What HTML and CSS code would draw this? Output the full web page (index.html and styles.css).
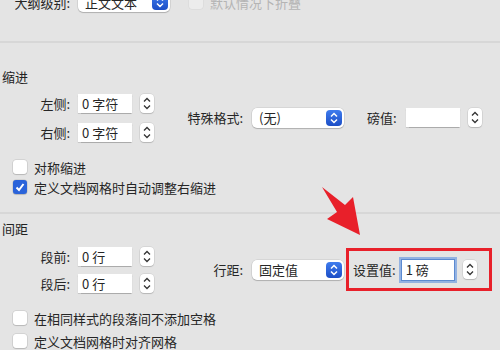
FILE: index.html
```html
<!DOCTYPE html>
<html lang="zh">
<head>
  <meta charset="UTF-8">
  <title>段落</title>
  <link rel="stylesheet" href="styles.css">
</head>
<body>

<div class="panel">
  <div class="row toprow">
    <span class="lbl">大纲级别:</span>
    <div class="popup"><span>正文文本</span><span class="popup-btn"><svg width="16" height="16"><path d="M5 6.5 L8 3.5 L11 6.5 M5 9.5 L8 12.5 L11 9.5" fill="none" stroke="#fff" stroke-width="1.5"/></svg></span></div>
    <span class="check disabled"></span>
    <span class="dim">默认情况下折叠</span>
  </div>

  <div class="sep first"></div>

  <h2 class="heading indent-head">缩进</h2>
  <div class="group indent">
    <div class="col">
      <div class="row">
        <span class="lbl">左侧:</span>
        <span class="field">0 字符</span>
        <span class="stepper"><svg width="14" height="19"><path d="M4 7.5 L7 4.5 L10 7.5 M4 11.5 L7 14.5 L10 11.5" fill="none" stroke="#333" stroke-width="1.3"/></svg></span>
      </div>
      <div class="row">
        <span class="lbl">右侧:</span>
        <span class="field">0 字符</span>
        <span class="stepper"><svg width="14" height="19"><path d="M4 7.5 L7 4.5 L10 7.5 M4 11.5 L7 14.5 L10 11.5" fill="none" stroke="#333" stroke-width="1.3"/></svg></span>
      </div>
    </div>
    <div class="side">
      <span class="lbl wide">特殊格式:</span>
      <div class="popup"><span>(无)</span><span class="popup-btn"><svg width="16" height="16"><path d="M5 6.5 L8 3.5 L11 6.5 M5 9.5 L8 12.5 L11 9.5" fill="none" stroke="#fff" stroke-width="1.5"/></svg></span></div>
      <span class="lbl pts">磅值:</span>
      <span class="field"></span>
      <span class="stepper"><svg width="14" height="19"><path d="M4 7.5 L7 4.5 L10 7.5 M4 11.5 L7 14.5 L10 11.5" fill="none" stroke="#333" stroke-width="1.3"/></svg></span>
    </div>
  </div>

  <div class="checks indent-checks">
    <label class="opt"><span class="check"></span>对称缩进</label>
    <label class="opt"><span class="check on"><svg width="14" height="14"><path d="M3.5 7.5 L6 10 L10.5 4" fill="none" stroke="#fff" stroke-width="2"/></svg></span>定义文档网格时自动调整右缩进</label>
  </div>

  <div class="sep"></div>

  <h2 class="heading">间距</h2>
  <div class="group spacing">
    <div class="col">
      <div class="row">
        <span class="lbl">段前:</span>
        <span class="field">0 行</span>
        <span class="stepper"><svg width="14" height="19"><path d="M4 7.5 L7 4.5 L10 7.5 M4 11.5 L7 14.5 L10 11.5" fill="none" stroke="#333" stroke-width="1.3"/></svg></span>
      </div>
      <div class="row">
        <span class="lbl">段后:</span>
        <span class="field">0 行</span>
        <span class="stepper"><svg width="14" height="19"><path d="M4 7.5 L7 4.5 L10 7.5 M4 11.5 L7 14.5 L10 11.5" fill="none" stroke="#333" stroke-width="1.3"/></svg></span>
      </div>
    </div>
    <div class="side">
      <span class="lbl wide">行距:</span>
      <div class="popup"><span>固定值</span><span class="popup-btn"><svg width="16" height="16"><path d="M5 6.5 L8 3.5 L11 6.5 M5 9.5 L8 12.5 L11 9.5" fill="none" stroke="#fff" stroke-width="1.5"/></svg></span></div>
      <div class="mark">
        <span class="lbl">设置值:</span>
        <span class="field focus">1 磅</span>
        <span class="stepper"><svg width="14" height="19"><path d="M4 7.5 L7 4.5 L10 7.5 M4 11.5 L7 14.5 L10 11.5" fill="none" stroke="#333" stroke-width="1.3"/></svg></span>
      </div>
    </div>
  </div>

  <div class="checks spacing-checks">
    <label class="opt"><span class="check"></span>在相同样式的段落间不添加空格</label>
    <label class="opt"><span class="check"></span>定义文档网格时对齐网格</label>
  </div>
</div>

<!-- 标注箭头 -->
<svg class="arrow" width="500" height="350"><polygon points="322,187 345,205 353,197 360,235 327,219 337,212" fill="#e8202a"/></svg>

</body>
</html>
```

FILE: styles.css
```css
body {
  margin: 0;
  background-color: #e4e4e4;
  color: #262626;
  font-family: "Noto Sans CJK SC", "Noto Sans", sans-serif;
  font-size: 13px;
  overflow: hidden;
  position: relative;
  height: 350px;
}

.panel {
  padding-left: 2px;
}

.row {
  display: flex;
  align-items: center;
  height: 20px;
}

.toprow {
  margin-top: -9px;
  height: 22px;
}

.lbl {
  width: 68px;
  text-align: right;
  margin-right: 8px;
  white-space: nowrap;
}

.lbl.wide {
  width: 89px;
  margin-right: 9px;
}

.lbl.pts {
  width: auto;
  margin-left: 23px;
  margin-right: 9px;
}

.dim {
  color: #b4b4b4;
}

.sep {
  border-top: 2px solid #d7d7d7;
  margin: 15px -2px 0;
}

.sep.first {
  margin-top: 28px;
}

.heading {
  margin: 6px 0 0;
  font-size: 13px;
  font-weight: normal;
  line-height: 18px;
  color: #222;
}

.indent-head {
  margin-top: 25px;
}

.group {
  display: flex;
  align-items: center;
}

.indent {
  margin-top: 7px;
}

.spacing {
  margin-top: 8px;
}

.col {
  display: flex;
  flex-direction: column;
  gap: 9px;
}

.spacing .col {
  gap: 7px;
}

.side {
  display: flex;
  align-items: center;
}

.field {
  width: 50px;
  height: 19px;
  padding-left: 4px;
  background-color: #fff;
  box-shadow: 0 0.5px 1px rgba(0,0,0,0.25);
  line-height: 20px;
  margin-right: 8px;
}

.field.focus {
  width: 48px;
  height: 20px;
  margin-left: 2px;
  margin-right: 9px;
  box-shadow: 0 0 0 1px #5c8ad0, 0 0 0 3px #93b2e2;
}

.stepper {
  width: 14px;
  height: 19px;
  background-color: #fff;
  border-radius: 4px;
  box-shadow: 0 0 0 0.5px rgba(0,0,0,0.12), 0 1px 1px rgba(0,0,0,0.15);
  display: flex;
}

.popup {
  width: 83px;
  height: 20px;
  padding: 0 2px 0 7px;
  display: flex;
  align-items: center;
  justify-content: space-between;
  background-color: #fff;
  border-radius: 5px;
  box-shadow: 0 0 0 0.5px rgba(0,0,0,0.12), 0 1px 1px rgba(0,0,0,0.18);
}

.popup-btn {
  width: 16px;
  height: 16px;
  border-radius: 4px;
  background: linear-gradient(#3f7cee, #1c4ec6);
  display: flex;
}

.mark {
  display: flex;
  align-items: center;
  margin-left: 2px;
  width: 140px;
  height: 37px;
  border: 3px solid #e8202a;
}

.mark .lbl {
  width: auto;
  margin-left: 4px;
  margin-right: 4px;
}

.check {
  width: 14px;
  height: 14px;
  border-radius: 3px;
  background-color: #fff;
  box-shadow: 0 0 0 0.5px rgba(0,0,0,0.15), 0 1px 1px rgba(0,0,0,0.12);
  margin-right: 7px;
  flex-shrink: 0;
  display: flex;
}

.check.on {
  background-color: #2a63da;
}

.check.disabled {
  margin-left: 19px;
  background-color: #ececec;
  box-shadow: 0 0 0 0.5px rgba(0,0,0,0.06);
}

.checks {
  display: flex;
  flex-direction: column;
  padding-left: 11px;
}

.indent-checks {
  margin-top: 15px;
}

.spacing-checks {
  margin-top: 15px;
  gap: 3px;
}

.opt {
  display: flex;
  align-items: center;
  height: 20px;
}

.arrow {
  position: absolute;
  left: 0;
  top: 0;
  pointer-events: none;
}
```
